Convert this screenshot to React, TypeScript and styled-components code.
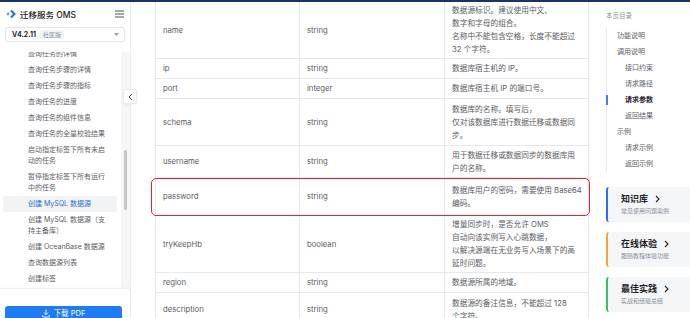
import React from 'react';
import styled, {createGlobalStyle, css} from 'styled-components';

export const GlobalStyle = createGlobalStyle`
  html, body {
    margin: 0;
    padding: 0;
    width: 690px;
    height: 318px;
    overflow: hidden;
    background: #ffffff;
    font-family: 'Inter', 'Noto Sans CJK SC', sans-serif;
    color: #5c6066;
  }
  * {
    box-sizing: border-box;
  }
`;

const Page = styled.div`
  display: flex;
  flex-direction: column;
  width: 690px;
  height: 318px;
  overflow: hidden;
`;

// 상단 네이비 라인
const TopBar = styled.div`
  height: 2px;
  flex-shrink: 0;
  background: #16346a;
`;

const Body = styled.div`
  display: flex;
  flex: 1;
  min-height: 0;
`;

/* ---------- sidebar ---------- */
const Sidebar = styled.aside`
  position: relative;
  width: 131px;
  flex-shrink: 0;
  display: flex;
  flex-direction: column;
  border-right: 1px solid #ebedf0;
`;

const SideHeader = styled.div`
  height: 24px;
  display: flex;
  align-items: center;
  justify-content: space-between;
  padding: 0 6px 0 6px;
`;

const Brand = styled.div`
  display: flex;
  align-items: center;
  gap: 3px;
  font-size: 8.5px;
  font-weight: 500;
  color: #1f2329;
  white-space: nowrap;
`;

const VersionSelect = styled.div`
  height: 15px;
  margin: 1px 5px 0 5px;
  display: flex;
  align-items: center;
  padding: 0 5px 0 6px;
  border: 1px solid #e3e5e8;
  border-radius: 3px;
`;

const Version = styled.span`
  font-size: 7px;
  font-weight: 700;
  color: #1f2329;
`;

const Tag = styled.span`
  margin-left: 4px;
  padding: 0 3px;
  font-size: 6px;
  line-height: 9px;
  color: #8a8f99;
  background: #f2f3f5;
  border-radius: 2px;
`;

const Caret = styled.span`
  margin-left: auto;
  display: flex;
`;

const NavWrap = styled.div`
  margin-top: 10px;
  flex: 1;
  min-height: 0;
  display: flex;
  overflow: hidden;
`;

const NavList = styled.div`
  flex: 1;
  margin-top: -6.5px;
  padding: 0 4px 0 3px;
`;

const NavItem = styled.div<{ $active?: boolean }>`
  padding: 2.5px 6px 2.5px 25px;
  font-size: 7px;
  line-height: 11px;
  color: #5c6066;
  border-radius: 3px;
  ${p => p.$active && css`
    background: #f2f3f5;
    color: #1f6fe8;
  `}
`;

const Track = styled.div`
  width: 9px;
  flex-shrink: 0;
  background: #f6f6f7;
  padding: 98px 0 0 3px;
`;

const Thumb = styled.div`
  width: 3px;
  height: 60px;
  border-radius: 2px;
  background: #c4c6ca;
`;

const SideFooter = styled.div`
  height: 30px;
  flex-shrink: 0;
  padding: 17px 8px 0 5px;
  border-top: 1px solid #f0f1f3;
  box-shadow: 0 -2px 4px rgba(0, 0, 0, 0.02);
`;

const PdfButton = styled.div`
  height: 20px;
  display: flex;
  justify-content: center;
  gap: 4px;
  padding-top: 3px;
  background: #1e7bf2;
  border-radius: 3px;
  color: #ffffff;
  font-size: 7.5px;
  line-height: 10px;
`;

const CollapseBtn = styled.div`
  position: absolute;
  top: 87px;
  right: -7px;
  width: 14px;
  height: 15px;
  display: flex;
  align-items: center;
  justify-content: center;
  background: #ffffff;
  border: 1px solid #e6e8eb;
  border-radius: 2px;
  box-shadow: 0 1px 3px rgba(0, 0, 0, 0.06);
  z-index: 2;
`;

/* ---------- main table ---------- */
const Main = styled.main`
  flex: 1;
  min-width: 0;
  overflow: hidden;
  padding: 0 11px 0 24px;
`;

const Table = styled.div`
  border-left: 1px solid #e6e8eb;
  border-right: 1px solid #e6e8eb;
`;

const Row = styled.div<{ $h: number; $marked?: boolean }>`
  position: relative;
  display: grid;
  grid-template-columns: 143px 145px 1fr;
  height: ${p => p.$h}px;
  border-bottom: 1px solid #e6e8eb;
  ${p => p.$marked && css`
    &::after {
      content: '';
      position: absolute;
      top: 0;
      left: -5px;
      right: -2px;
      bottom: -1px;
      border: 1.5px solid #e3262c;
      border-radius: 5px;
    }
  `}
`;

const Cell = styled.div`
  display: flex;
  flex-direction: column;
  justify-content: center;
  padding: 0 7px;
  font-size: 7.7px;
  line-height: 13px;
  color: #595c63;
  white-space: nowrap;
  & + & {
    border-left: 1px solid #e6e8eb;
  }
`;

/* ---------- right toc ---------- */
const Toc = styled.aside`
  width: 90px;
  flex-shrink: 0;
  padding: 9px 0 0 6px;
`;

const TocTitle = styled.div`
  font-size: 6.5px;
  line-height: 10px;
  color: #8a8f99;
`;

const TocList = styled.div`
  margin-top: 7px;
  border-left: 1px solid #e8e9ec;
`;

const TocItem = styled.div<{ $level: number; $active?: boolean }>`
  position: relative;
  height: 16px;
  line-height: 16px;
  padding-left: ${p => (p.$level === 1 ? 10 : 18)}px;
  font-size: 7px;
  color: #5c6066;
  white-space: nowrap;
  ${p => p.$active && css`
    font-weight: 700;
    color: #1f2329;
    &::before {
      content: '';
      position: absolute;
      left: -1px;
      top: 3px;
      width: 2px;
      height: 10px;
      background: #3b82f6;
    }
  `}
`;

const Cards = styled.div`
  margin-top: 15px;
  display: flex;
  flex-direction: column;
  gap: 10px;
`;

const Card = styled.div<{ $color: string }>`
  width: 100px;
  height: 35px;
  padding: 6px 0 0 13px;
  background: #f5f6f8;
  border-left: 2px solid ${p => p.$color};
  border-radius: 3px;
`;

const CardTitle = styled.div`
  display: flex;
  align-items: center;
  gap: 7px;
  font-size: 9px;
  line-height: 12px;
  font-weight: 700;
  color: #1f2329;
`;

const CardSub = styled.div`
  margin-top: 2px;
  font-size: 6px;
  line-height: 8px;
  color: #8a8f99;
`;

const navItems = [
  {label: '查询任务的详情'},
  {label: '查询任务步骤的详情'},
  {label: '查询任务步骤的指标'},
  {label: '查询任务的进度'},
  {label: '查询任务的组件信息'},
  {label: '查询任务的全量校验结果'},
  {label: ['启动指定标签下所有未启', '动的任务']},
  {label: ['暂停指定标签下所有运行', '中的任务']},
  {label: '创建 MySQL 数据源', active: true},
  {label: ['创建 MySQL 数据源（支', '持主备库）']},
  {label: '创建 OceanBase 数据源'},
  {label: '查询数据源列表'},
  {label: '创建标签'},
];

const params = [
  {name: 'name', type: 'string', h: 57, desc: ['数据源标识。建议使用中文、', '数字和字母的组合。', '名称中不能包含空格，长度不能超过', '32 个字符。']},
  {name: 'ip', type: 'string', h: 20, desc: ['数据库宿主机的 IP。']},
  {name: 'port', type: 'integer', h: 20, desc: ['数据库宿主机 IP 的端口号。']},
  {name: 'schema', type: 'string', h: 47, desc: ['数据库的名称。填写后，', '仅对该数据库进行数据迁移或数据同', '步。']},
  {name: 'username', type: 'string', h: 32, desc: ['用于数据迁移或数据同步的数据库用', '户的名称。']},
  {name: 'password', type: 'string', h: 38, marked: true, desc: ['数据库用户的密码，需要使用 Base64', '编码。']},
  {name: 'tryKeepHb', type: 'boolean', h: 57, desc: ['增量同步时，是否允许 OMS', '自动向该实例写入心跳数据，', '以解决源端在无业务写入场景下的高', '延时问题。']},
  {name: 'region', type: 'string', h: 20, desc: ['数据源所属的地域。']},
  {name: 'description', type: 'string', h: 34, desc: ['数据源的备注信息，不能超过 128', '个字符。']},
];

const tocItems = [
  {label: '功能说明', level: 1},
  {label: '调用说明', level: 1},
  {label: '接口约束', level: 2},
  {label: '请求路径', level: 2},
  {label: '请求参数', level: 2, active: true},
  {label: '返回结果', level: 2},
  {label: '示例', level: 1},
  {label: '请求示例', level: 2},
  {label: '返回示例', level: 2},
];

const cards = [
  {title: '知识库', sub: '常见使用问题案例', color: '#2f6bf5'},
  {title: '在线体验', sub: '跟随教程体验功能', color: '#f5a33b'},
  {title: '最佳实践', sub: '实战和经验总结', color: '#33c25c'},
];

const Chevron = () => (
  <svg width="5" height="8" viewBox="0 0 5 8">
    <path d="M1 1l3 3-3 3" fill="none" stroke="#1f2329" strokeWidth="1.1" />
  </svg>
);

function App() {
  return (
    <Page>
      <GlobalStyle />
      <TopBar />
      <Body>
        <Sidebar>
          <SideHeader>
            <Brand>
              <svg width="11" height="10" viewBox="0 0 11 10">
                <circle cx="2" cy="5" r="1.4" fill="#5aa0ff" />
                <path d="M5 1.5l3.4 3.5L5 8.5" fill="none" stroke="#1f6fe8" strokeWidth="2" />
              </svg>
              迁移服务 OMS
            </Brand>
            <svg width="9" height="8" viewBox="0 0 9 8">
              <path d="M0 1h9M0 4h9M0 7h9" stroke="#4a4e55" strokeWidth="1" />
            </svg>
          </SideHeader>
          <VersionSelect>
            <Version>V4.2.11</Version>
            <Tag>社区版</Tag>
            <Caret>
              <svg width="5" height="3" viewBox="0 0 5 3">
                <path d="M0 0h5L2.5 3z" fill="#9aa0a8" />
              </svg>
            </Caret>
          </VersionSelect>
          <NavWrap>
            <NavList>
              {navItems.map((item, i) => (
                <NavItem key={i} $active={item.active}>
                  {Array.isArray(item.label)
                    ? item.label.map((l, j) => <div key={j}>{l}</div>)
                    : item.label}
                </NavItem>
              ))}
            </NavList>
            <Track>
              <Thumb />
            </Track>
          </NavWrap>
          <SideFooter>
            <PdfButton>
              <svg width="8" height="9" viewBox="0 0 8 9">
                <path d="M4 0.5v5M2 3.6l2 2 2-2" fill="none" stroke="#ffffff" strokeWidth="0.9" />
                <path d="M0.7 6v2h6.6V6" fill="none" stroke="#ffffff" strokeWidth="0.9" />
              </svg>
              下载 PDF
            </PdfButton>
          </SideFooter>
          <CollapseBtn>
            <svg width="5" height="8" viewBox="0 0 5 8">
              <path d="M4 1L1 4l3 3" fill="none" stroke="#3c4047" strokeWidth="1" />
            </svg>
          </CollapseBtn>
        </Sidebar>

        <Main>
          <Table>
            {params.map(p => (
              <Row key={p.name} $h={p.h} $marked={p.marked}>
                <Cell>{p.name}</Cell>
                <Cell>{p.type}</Cell>
                <Cell>
                  {p.desc.map((d, i) => <div key={i}>{d}</div>)}
                </Cell>
              </Row>
            ))}
          </Table>
        </Main>

        <Toc>
          <TocTitle>本页目录</TocTitle>
          <TocList>
            {tocItems.map(t => (
              <TocItem key={t.label} $level={t.level} $active={t.active}>{t.label}</TocItem>
            ))}
          </TocList>
          <Cards>
            {cards.map(c => (
              <Card key={c.title} $color={c.color}>
                <CardTitle>{c.title}<Chevron /></CardTitle>
                <CardSub>{c.sub}</CardSub>
              </Card>
            ))}
          </Cards>
        </Toc>
      </Body>
    </Page>
  );
}

export default App;
